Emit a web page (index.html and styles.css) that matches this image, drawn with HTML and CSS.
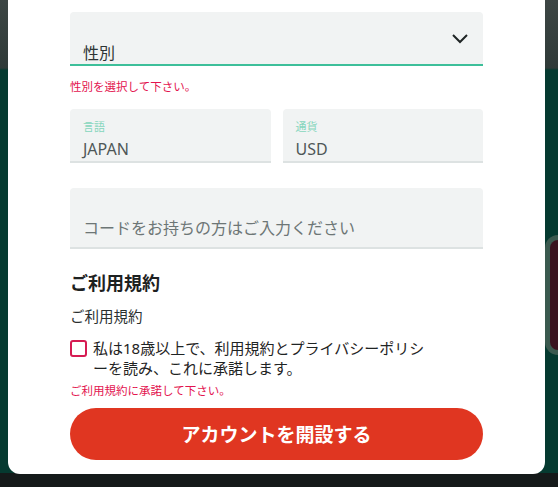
FILE: index.html
```html
<!DOCTYPE html>
<html>
<head>
    <title>アカウント登録</title>
    <link rel="stylesheet" href="styles.css">
</head>
<body>
    <div class="backdrop-deco"></div>
    <div class="modal">
        <form class="signup" id="signupForm">
            <div class="field select-field">
                <span class="value">性別</span>
                <svg class="chevron" width="18" height="12" viewBox="0 0 18 12">
                    <path d="M2 2 L9 9 L16 2" fill="none" stroke="#1f2424" stroke-width="2"/>
                </svg>
            </div>
            <div class="error first-error">性別を選択して下さい。</div>

            <div class="row">
                <div class="field small-field">
                    <span class="label">言語</span>
                    <span class="value">JAPAN</span>
                </div>
                <div class="field small-field">
                    <span class="label">通貨</span>
                    <span class="value">USD</span>
                </div>
            </div>

            <div class="field code-field">
                <span class="placeholder">コードをお持ちの方はご入力ください</span>
            </div>

            <h3>ご利用規約</h3>
            <p class="terms-title">ご利用規約</p>

            <label class="agree">
                <span class="box"></span>
                <span class="agree-text">私は18歳以上で、利用規約とプライバシーポリシーを読み、これに承諾します。</span>
            </label>
            <div class="error">ご利用規約に承諾して下さい。</div>

            <button type="button" class="submit">アカウントを開設する</button>
        </form>
    </div>
</body>
</html>
```

FILE: styles.css
```css
body {
    margin: 0;
    height: 487px;
    overflow: hidden;
    font-family: "Noto Sans", "Noto Sans CJK JP", sans-serif;
    background: linear-gradient(to bottom, #3d4644 0, #2f3a38 68px, #053a30 70px, #053a30 473px, #151a1a 473px);
    position: relative;
}
.backdrop-deco {
    position: absolute;
    right: 0;
    top: 235px;
    width: 8px;
    height: 110px;
    border-radius: 60px 0 0 60px;
    border: 5px solid #3b5a4f;
    border-right: none;
    background: #3a1420;
}
.modal {
    position: relative;
    background-color: #fff;
    margin: 0 13px 0 8px;
    padding: 12px 62px 14px 62px;
    border-radius: 0 0 12px 12px;
}
.signup {
    display: flex;
    flex-direction: column;
}
.field {
    background-color: #f1f3f3;
    border-radius: 4px 4px 0 0;
    box-sizing: border-box;
    position: relative;
}
.select-field {
    height: 54px;
    border-bottom: 2px solid #3dbf9a;
    display: flex;
    align-items: flex-end;
    padding: 0 13px 1px;
}
.value {
    font-size: 16px;
    line-height: 20px;
    color: #2e3434;
}
.chevron {
    position: absolute;
    right: 14px;
    top: 21px;
}
.error {
    font-size: 11.5px;
    line-height: 16px;
    color: #e3144f;
    margin-top: 13px;
}
.row {
    display: flex;
    gap: 12px;
    margin-top: 14px;
}
.small-field {
    flex: 1;
    height: 54px;
    border-bottom: 2px solid #dde2e2;
    display: flex;
    flex-direction: column;
    padding: 10px 13px 0;
}
.label {
    font-size: 11px;
    line-height: 16px;
    color: #86d6bd;
}
.small-field .value {
    margin-top: 4px;
    color: #4f5757;
}
.code-field {
    height: 61px;
    margin-top: 25px;
    border-bottom: 2px solid #dde2e2;
    display: flex;
    align-items: flex-end;
    padding: 0 13px 8px;
}
.placeholder {
    font-size: 16px;
    line-height: 22px;
    color: #6d7676;
}
h3 {
    margin: 22px 0 0;
    font-size: 18px;
    line-height: 24px;
    font-weight: bold;
    color: #1d2121;
}
.terms-title {
    margin: 11px 0 0;
    font-size: 14.5px;
    line-height: 20px;
    color: #2a2f2f;
}
.agree {
    display: flex;
    align-items: flex-start;
    gap: 6px;
    margin-top: 12px;
    padding-right: 50px;
}
.box {
    flex: none;
    width: 13px;
    height: 13px;
    margin-top: 2px;
    border: 2px solid #d61b52;
    border-radius: 3px;
}
.agree-text {
    font-size: 15px;
    line-height: 20px;
    color: #1f2424;
}
.agree + .error {
    margin-top: 5px;
}
.submit {
    margin-top: 9px;
    height: 52px;
    border: none;
    border-radius: 26px;
    background-color: #e03621;
    color: #fff;
    font-family: inherit;
    font-size: 19px;
    font-weight: bold;
    cursor: pointer;
}
```
